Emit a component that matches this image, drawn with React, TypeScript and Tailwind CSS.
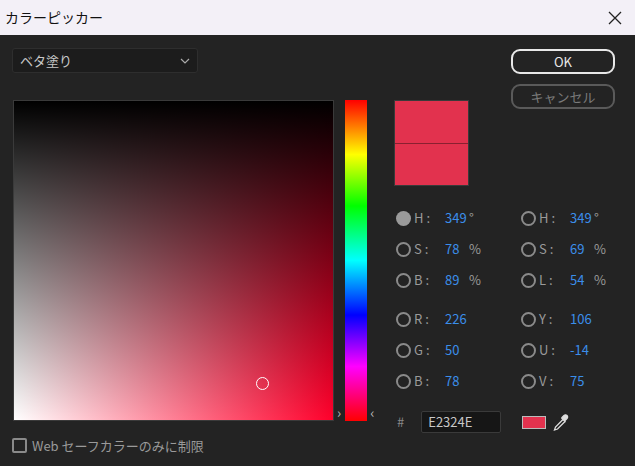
import React from "react";

const font = { fontFamily: '"Noto Sans CJK JP", "Liberation Sans", sans-serif' };

const Radio = ({ on }: { on?: boolean }) =>
  on ? (
    <span className="w-[15px] h-[15px] rounded-full bg-[#9a9a9a] shrink-0" />
  ) : (
    <span className="w-[15px] h-[15px] rounded-full border-2 border-[#8a8a8a] shrink-0" />
  );

const Field = ({ on, label, value, unit }: { on?: boolean; label: string; value: string; unit?: string }) => (
  <div className="flex items-center h-[20px]">
    <Radio on={on} />
    <span className="ml-[3px] w-[31px] text-[#9a9a9a] text-[13px]">{label} :</span>
    <span className="text-[#3b8eea] text-[13px] w-[24px]">{value}</span>
    {unit && <span className="text-[#9a9a9a] text-[13px]">{unit}</span>}
  </div>
);

export default function App() {
  return (
    <div className="w-[635px] h-[466px] bg-[#232323] overflow-hidden" style={font}>
      <div className="h-[35px] bg-[#f3f0f7] flex items-center justify-between pl-[5px] pr-[13px]">
        <span className="text-[14px] text-[#111]">カラーピッカー</span>
        <svg width="14" height="14" viewBox="0 0 14 14" stroke="#222" strokeWidth="1.3">
          <path d="M1 1L13 13M13 1L1 13" />
        </svg>
      </div>
      <div className="flex">
        <div className="w-[390px] pl-[12px] pt-[13px]">
          <div className="w-[186px] h-[25px] bg-[#1c1c1c] border border-[#2e2e2e] rounded-[3px] flex items-center justify-between px-[7px]">
            <span className="text-[#c8c8c8] text-[13px]">ベタ塗り</span>
            <svg width="10" height="6" viewBox="0 0 10 6" fill="none" stroke="#aaa" strokeWidth="1.2"><path d="M1 1l4 4 4-4" /></svg>
          </div>
          <div className="flex mt-[27px]">
            <div
              className="relative w-[321px] h-[321px] ml-[1px] border border-[#3a3a3a]"
              style={{
                background:
                  "linear-gradient(to bottom, rgba(0,0,0,0) 0%, rgba(0,0,0,0) 0%), linear-gradient(to top, transparent, #000), linear-gradient(to right, #fff, rgb(255,0,43))",
              }}
            >
              <div className="absolute left-[242px] top-[276px] w-[13px] h-[13px] rounded-full border border-white" />
            </div>
            <div className="ml-[3px] flex items-end">
              <span className="text-[#bbb] text-[14px] leading-none mb-[2px]">›</span>
            </div>
            <div className="ml-[4px] w-[22px] h-[321px] bg-[linear-gradient(to_bottom,#f00,#ff0_17%,#0f0_33%,#0ff_50%,#00f_67%,#f0f_83%,#f00)]" />
            <div className="ml-[3px] flex items-end">
              <span className="text-[#bbb] text-[14px] leading-none mb-[2px]">‹</span>
            </div>
          </div>
          <div className="flex items-center mt-[15px]">
            <span className="w-[15px] h-[15px] border-2 border-[#8a8a8a] rounded-[2px]" />
            <span className="ml-[5px] text-[#9a9a9a] text-[13px]">Web セーフカラーのみに制限</span>
          </div>
        </div>
        <div className="flex-1 flex flex-col">
          <div className="flex">
            <div className="pt-[65px] pl-[4px]">
              <div className="w-[75px] h-[86px] border border-[#3a3a3a] flex flex-col">
                <div className="flex-1 bg-[#e2324e] border-b border-[#8a2030]" />
                <div className="flex-1 bg-[#e2324e]" />
              </div>
            </div>
            <div className="ml-auto mr-[20px] mt-[14px] flex flex-col gap-[10px]">
              <div className="w-[104px] h-[25px] rounded-[9px] border-2 border-[#e8e8e8] flex items-center justify-center text-[#e8e8e8] text-[13px]">OK</div>
              <div className="w-[104px] h-[25px] rounded-[9px] border-2 border-[#5a5a5a] flex items-center justify-center text-[#7a7a7a] text-[13px]">キャンセル</div>
            </div>
          </div>
          <div className="grid grid-cols-[125px_1fr] pl-[6px] mt-[22px]">
            {[
              [
                { on: true, label: "H", value: "349", unit: "°" },
                { label: "S", value: "78", unit: "%" },
                { label: "B", value: "89", unit: "%" },
                { label: "R", value: "226" },
                { label: "G", value: "50" },
                { label: "B", value: "78" },
              ],
              [
                { label: "H", value: "349", unit: "°" },
                { label: "S", value: "69", unit: "%" },
                { label: "L", value: "54", unit: "%" },
                { label: "Y", value: "106" },
                { label: "U", value: "-14" },
                { label: "V", value: "75" },
              ],
            ].map((col, ci) => (
              <div key={ci} className="flex flex-col gap-[11px]">
                {col.map((f, i) => (
                  <div key={i} className={i === 3 ? "mt-[8px]" : ""}>
                    <Field {...f} />
                  </div>
                ))}
              </div>
            ))}
          </div>
          <div className="flex items-center mt-[20px]">
            <span className="ml-[7px] text-[#8a8a8a] text-[13px]">#</span>
            <div className="ml-[17px] w-[80px] h-[22px] bg-[#161616] border border-[#3a3a3a] rounded-[2px] flex items-center pl-[6px] text-[#c8c8c8] text-[13px]">E2324E</div>
            <div className="ml-[21px] w-[24px] h-[13px] bg-[#e2324e] border border-[#bbb]" />
            <svg className="ml-[6px]" width="19" height="19" viewBox="0 0 19 19" fill="none" stroke="#ddd" strokeWidth="1.3">
              <path d="M12 2.5a2 2 0 0 1 3 3l-2 2-3-3z" fill="#ddd" />
              <path d="M9.5 5l4 4" />
              <path d="M11 6.5L3.5 14l-1 3 3-1 7.5-7.5" />
            </svg>
          </div>
        </div>
      </div>
    </div>
  );
}
